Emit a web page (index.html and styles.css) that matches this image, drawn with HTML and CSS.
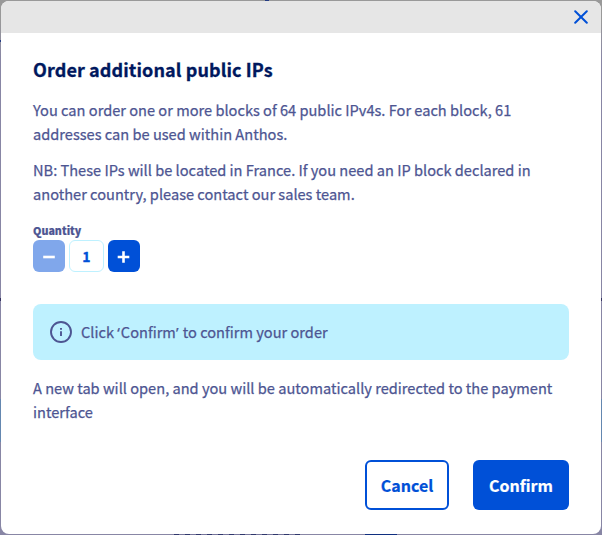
FILE: index.html
```
<!DOCTYPE html>
<html lang="en">
<head>
<meta charset="utf-8">
<title>Order additional public IPs</title>
<link rel="stylesheet" href="styles.css">
</head>
<body>
<div class="modal" role="dialog">
  <header class="modal-header">
    <button class="close" aria-label="Close"><svg width="14" height="14" viewBox="0 0 14 14"><path d="M1.2 1.2 12.8 12.8M12.8 1.2 1.2 12.8"/></svg></button>
  </header>
  <main class="content">
    <h1>Order additional public IPs</h1>
    <p>You can order one or more blocks of 64 public IPv4s. For each block, 61<br>addresses can be used within Anthos.</p>
    <p>NB: These IPs will be located in France. If you need an IP block declared in<br>another country, please contact our sales team.</p>
    <div class="quantity">
      <span class="label">Quantity</span>
      <div class="stepper">
        <button class="step disabled" aria-label="Decrease"><svg width="32" height="32"><path d="M10.2 17H21.8"/></svg></button>
        <span class="value">1</span>
        <button class="step" aria-label="Increase"><svg width="32" height="32"><path d="M9.7 17H21.3M15.5 11.2V22.8"/></svg></button>
      </div>
    </div>
    <div class="info">
      <svg width="22" height="22" viewBox="0 0 22 22"><circle cx="11" cy="11" r="10"/><path d="M11 10.2V15M11 7V8.7"/></svg>
      <span>Click <span class="quote">‘</span>Confirm<span class="quote">’</span> to confirm your order</span>
    </div>
    <p>A new tab will open, and you will be automatically redirected to the payment<br>interface</p>
  </main>
  <footer class="actions">
    <button class="btn cancel">Cancel</button>
    <button class="btn confirm">Confirm</button>
  </footer>
</div>
</body>
</html>
```
FILE: styles.css
```
* { box-sizing: border-box; }
body {
  margin: 0;
  padding: 1px;
  width: 602px;
  height: 535px;
  overflow: hidden;
  font-family: "Noto Sans CJK SC", "Noto Sans", sans-serif;
  font-size: 14.62px;
  line-height: 24px;
  color: #4d5592;
  background:
    linear-gradient(#243c83, #243c83) 265px 0 / 4px 1px no-repeat,
    linear-gradient(#243c83, #243c83) 0 40px / 1px 2px no-repeat,
    linear-gradient(#33315f, #33315f) 0 298px / 602px 3px no-repeat,
    linear-gradient(#6487b0, #6487b0) 0 399px / 602px 43px no-repeat,
    repeating-linear-gradient(90deg, #30386d 0 5px, #77769b 5px 11px) 174px 534px / 126px 1px no-repeat,
    linear-gradient(#102f80, #102f80) 365px 534px / 32px 1px no-repeat,
    linear-gradient(#999 0 20px, #8886a5 60px);
}
button { font: inherit; padding: 0; border: 0; }
svg { display: block; fill: none; }
.modal {
  display: flex;
  flex-direction: column;
  width: 600px;
  height: 533px;
  overflow: hidden;
  border-radius: 8px;
  background: #fff;
}
.modal-header {
  display: flex;
  justify-content: flex-end;
  align-items: center;
  height: 32px;
  padding-right: 13px;
  background: #e6e6e6;
}
.close { background: none; }
.close svg { stroke: #0050d7; stroke-width: 2; stroke-linecap: round; }
.content { padding: 24px 32px 0; }
h1 {
  margin: 0 0 17px;
  font-size: 18px;
  line-height: 24px;
  font-weight: 700;
  letter-spacing: 0.1px;
  color: #00185e;
  -webkit-text-stroke: 0.3px;
}
p { margin: 0 0 12px; white-space: nowrap; }
p, .info { -webkit-text-stroke: 0.25px; }
.quantity { margin-top: 16px; }
.label { display: block; font-size: 10.7px; line-height: 18px; font-weight: 900; -webkit-text-stroke: 0.2px; }
.stepper { display: flex; gap: 4px; height: 32px; }
.step { width: 32px; height: 32px; border-radius: 6px; background: #0050d7; }
.step.disabled { background: #80a7eb; }
.step svg { stroke: #fff; stroke-width: 2.6; }
.value {
  width: 35px;
  border: 1px solid #bef1ff;
  border-radius: 6px;
  text-align: center;
  font-size: 14px;
  line-height: 30px;
  font-weight: 700;
  color: #0050d7;
  -webkit-text-stroke: 0.3px;
}
.info {
  display: flex;
  align-items: center;
  gap: 9px;
  height: 56px;
  margin: 32px 0 16px;
  padding-left: 17px;
  border-radius: 8px;
  background: #bef1ff;
}
.quote { font-family: "Noto Sans", sans-serif; line-height: 1; letter-spacing: 1px; }
.info svg { stroke: #4d5592; stroke-width: 1.9; }
.actions { display: flex; justify-content: flex-end; gap: 24px; margin: auto 32px 24px; }
.btn { height: 50px; border-radius: 6px; font-size: 16px; font-weight: 700; -webkit-text-stroke: 0.2px; }
.cancel { width: 84px; border: 2px solid #0050d7; color: #0050d7; background: #fff; }
.confirm { width: 96px; color: #fff; background: #0050d7; }
```
